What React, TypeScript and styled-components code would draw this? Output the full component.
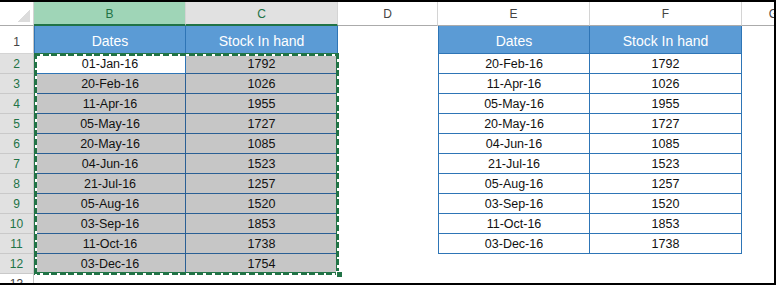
import React from "react";
import styled, { createGlobalStyle, css } from "styled-components";

const GlobalStyle = createGlobalStyle`
  html, body {
    margin: 0;
    padding: 0;
    background: #ffffff;
  }
  body {
    font-family: "Liberation Sans", Arial, sans-serif;
  }
`;

const GREEN = "#217346";
const BLUE_LINE = "#2e75b6";
const BLUE_LINE_DARK = "#2a5f94";

const leftRows = [
  ["01-Jan-16", "1792"],
  ["20-Feb-16", "1026"],
  ["11-Apr-16", "1955"],
  ["05-May-16", "1727"],
  ["20-May-16", "1085"],
  ["04-Jun-16", "1523"],
  ["21-Jul-16", "1257"],
  ["05-Aug-16", "1520"],
  ["03-Sep-16", "1853"],
  ["11-Oct-16", "1738"],
  ["03-Dec-16", "1754"],
];

const rightRows = [
  ["20-Feb-16", "1792"],
  ["11-Apr-16", "1026"],
  ["05-May-16", "1955"],
  ["20-May-16", "1727"],
  ["04-Jun-16", "1085"],
  ["21-Jul-16", "1523"],
  ["05-Aug-16", "1257"],
  ["03-Sep-16", "1520"],
  ["11-Oct-16", "1853"],
  ["03-Dec-16", "1738"],
];

const columns = ["B", "C", "D", "E", "F", "G"];

function App() {
  // row headers plus the cells that no table covers (D, G, and E/F under the right table)
  const sheetRows = [];
  for (let r = 1; r <= 13; r++) {
    sheetRows.push(
      <RowHead key={`h${r}`} $selected={r >= 2 && r <= 12} $tall={r === 1}>
        {r}
      </RowHead>
    );
    if (r === 13) {
      sheetRows.push(<Blank key="b13" />, <Blank key="c13" />);
    }
    sheetRows.push(<Blank key={`d${r}`} />);
    if (r >= 12) {
      sheetRows.push(<Blank key={`e${r}`} />, <Blank key={`f${r}`} />);
    }
    sheetRows.push(<Blank key={`g${r}`} />);
  }

  return (
    <>
      <GlobalStyle />
      <Frame>
        <Sheet>
          <Corner>
            <CornerTriangle />
          </Corner>
          {columns.map((c) => (
            <ColHead
              key={c}
              $selected={c === "B" || c === "C"}
              $active={c === "B"}
            >
              {c}
            </ColHead>
          ))}

          <DataTable $col="2 / 4" $row="2 / 14" $rows={11}>
            <TableHead $first>Dates</TableHead>
            <TableHead>Stock In hand</TableHead>
            <Selection>
              {leftRows.map(([date, stock], i) => (
                <React.Fragment key={date}>
                  <TableCell $first $selected={i !== 0}>
                    {date}
                  </TableCell>
                  <TableCell $selected>{stock}</TableCell>
                </React.Fragment>
              ))}
              <MarchingAnts>
                <FillHandle />
              </MarchingAnts>
            </Selection>
          </DataTable>

          <DataTable $col="5 / 7" $row="2 / 13" $rows={10}>
            <TableHead $first>Dates</TableHead>
            <TableHead>Stock In hand</TableHead>
            {rightRows.map(([date, stock]) => (
              <React.Fragment key={date}>
                <TableCell $first>{date}</TableCell>
                <TableCell>{stock}</TableCell>
              </React.Fragment>
            ))}
          </DataTable>

          {sheetRows}
        </Sheet>
      </Frame>
    </>
  );
}

export default App;

const Frame = styled.div`
  width: 776px;
  height: 285px;
  box-sizing: border-box;
  border-top: 2px solid #000;
  border-right: 2px solid #000;
  border-bottom: 2px solid #000;
  overflow: hidden;
  background: #fff;
`;

const Sheet = styled.div`
  display: grid;
  grid-template-columns: 34px 152px 152px 100px 152px 152px 64px;
  grid-template-rows: 24px 28px repeat(11, 20px) 20px;
  font-family: "Liberation Sans", Arial, sans-serif;
`;

const Corner = styled.div`
  box-sizing: border-box;
  border-right: 1px solid #d4d4d4;
  border-bottom: 1px solid #ababab;
  background: #fff;
  display: flex;
  justify-content: flex-end;
  align-items: flex-end;
  padding: 0 3px 3px 0;
`;

const CornerTriangle = styled.div`
  width: 12px;
  height: 12px;
  background: linear-gradient(135deg, transparent 50%, #dcdcdc 50%);
`;

const ColHead = styled.div<{ $selected?: boolean; $active?: boolean }>`
  box-sizing: border-box;
  display: flex;
  justify-content: center;
  align-items: flex-end;
  padding-bottom: 4px;
  font-size: 12px;
  color: #444;
  background: #fff;
  border-right: 1px solid #d4d4d4;
  border-bottom: 1px solid #ababab;

  ${(p) =>
    p.$selected &&
    css`
      color: ${GREEN};
      background: #e1e1e1;
      border-bottom: 2px solid ${GREEN};
      padding-bottom: 3px;
    `}

  ${(p) =>
    p.$active &&
    css`
      background: #9fd5b7;
    `}
`;

const RowHead = styled.div<{ $selected?: boolean; $tall?: boolean }>`
  box-sizing: border-box;
  display: flex;
  justify-content: center;
  align-items: flex-end;
  padding-bottom: ${(p) => (p.$tall ? "4px" : "2px")};
  font-size: 12px;
  color: ${(p) => (p.$selected ? GREEN : "#444")};
  background: ${(p) => (p.$selected ? "#e1e1e1" : "#fff")};
  border-right: 1px solid #c6c6c6;
  border-bottom: 1px solid ${(p) => (p.$selected ? "#c9c9c9" : "#d4d4d4")};
`;

const Blank = styled.div`
  background: #fff;
`;

const DataTable = styled.div<{ $col: string; $row: string; $rows: number }>`
  grid-column: ${(p) => p.$col};
  grid-row: ${(p) => p.$row};
  display: grid;
  grid-template-columns: 152px 152px;
  grid-template-rows: 28px repeat(${(p) => p.$rows}, 20px);
`;

const Selection = styled.div`
  grid-column: 1 / 3;
  grid-row: 2 / 13;
  display: grid;
  grid-template-columns: 152px 152px;
  grid-template-rows: repeat(11, 20px);
  position: relative;
`;

const TableHead = styled.div<{ $first?: boolean }>`
  box-sizing: border-box;
  display: flex;
  justify-content: center;
  align-items: center;
  padding-top: 2px;
  font-size: 14px;
  color: #fff;
  background: #5b9bd5;
  border-right: 1px solid ${BLUE_LINE};
  border-bottom: 1px solid ${BLUE_LINE};
  border-left: ${(p) => (p.$first ? `1px solid ${BLUE_LINE}` : "none")};
`;

const TableCell = styled.div<{ $first?: boolean; $selected?: boolean }>`
  box-sizing: border-box;
  display: flex;
  justify-content: center;
  align-items: center;
  padding-top: 1px;
  font-size: 12.5px;
  color: #111;
  background: ${(p) => (p.$selected ? "#c6c6c6" : "#fff")};
  border-right: 1px solid ${(p) => (p.$selected ? BLUE_LINE_DARK : BLUE_LINE)};
  border-bottom: 1px solid ${(p) => (p.$selected ? BLUE_LINE_DARK : BLUE_LINE)};
  border-left: ${(p) => (p.$first ? `1px solid ${BLUE_LINE}` : "none")};
`;

const dashH =
  "repeating-linear-gradient(90deg, transparent 0 6px, #fff 6px 8.6px)";
const dashV =
  "repeating-linear-gradient(180deg, transparent 0 6px, #fff 6px 8.6px)";

const MarchingAnts = styled.div`
  position: absolute;
  top: -1px;
  right: -1px;
  bottom: -1px;
  left: 0;
  pointer-events: none;
  background:
    ${dashH} 0 1px / 100% 2px no-repeat,
    ${dashH} 0 100% / 100% 2px no-repeat,
    ${dashV} 1px 0 / 2px 100% no-repeat,
    ${dashV} 100% 0 / 2px 100% no-repeat,
    linear-gradient(${GREEN}, ${GREEN}) 0 0 / 100% 3px no-repeat,
    linear-gradient(${GREEN}, ${GREEN}) 0 100% / 100% 3px no-repeat,
    linear-gradient(${GREEN}, ${GREEN}) 0 0 / 3px 100% no-repeat,
    linear-gradient(${GREEN}, ${GREEN}) 100% 0 / 3px 100% no-repeat;
`;

const FillHandle = styled.div`
  position: absolute;
  right: -4px;
  bottom: -3px;
  width: 5px;
  height: 5px;
  background: ${GREEN};
  border: 1px solid #fff;
`;
